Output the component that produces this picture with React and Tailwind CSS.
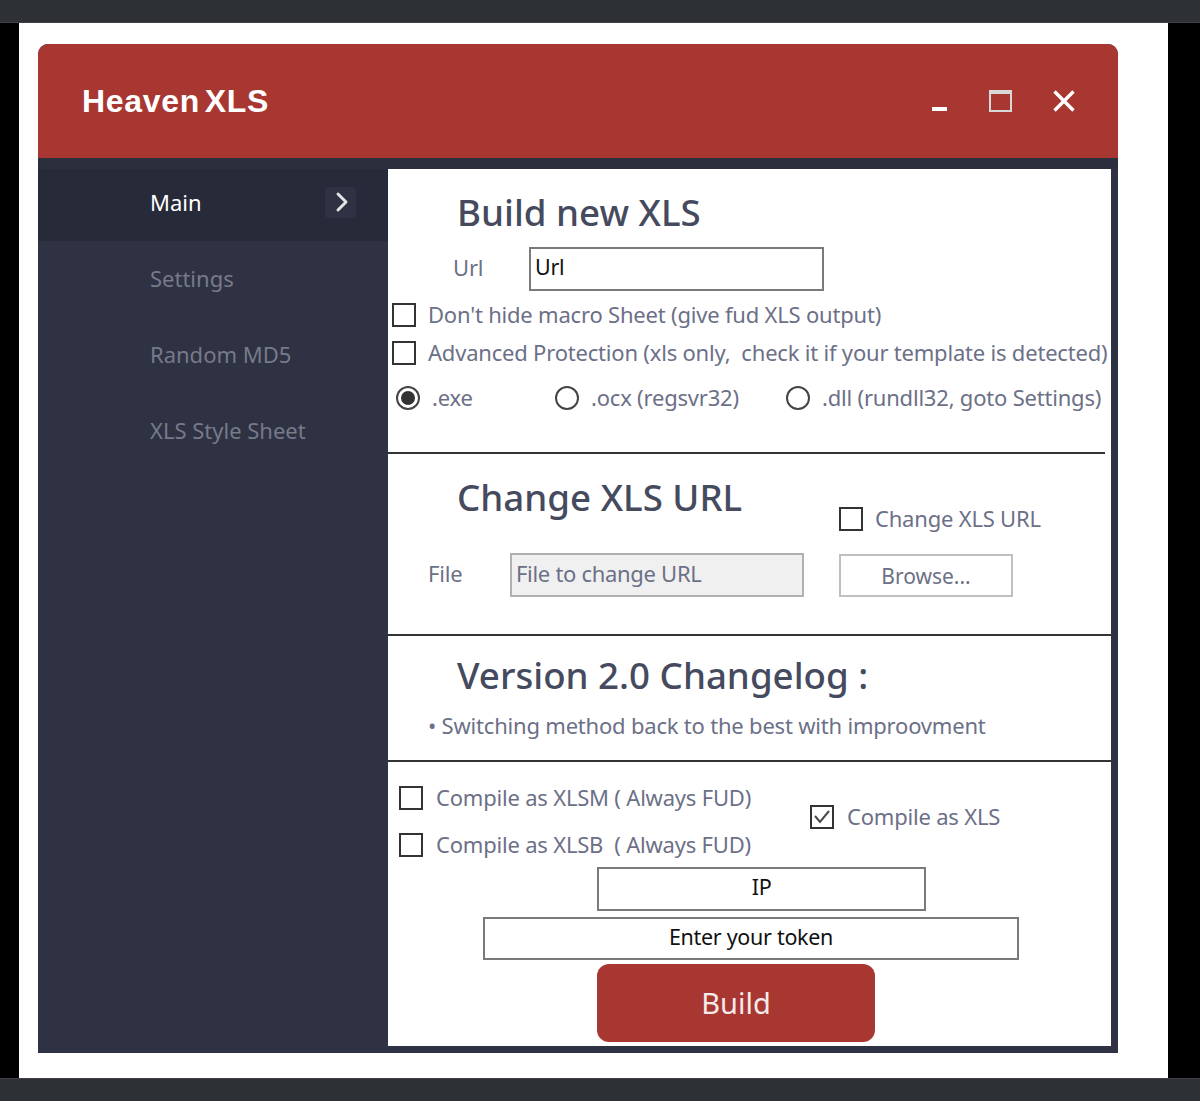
import React from 'react'
import { ChevronRight } from 'lucide-react'

const textFont = "font-['Noto_Sans','Open_Sans',sans-serif]"

function Check({ checked }) {
  return (
    <span className="flex h-[24px] w-[24px] shrink-0 items-center justify-center border-2 border-[#333333] bg-white">
      {checked && (
        <svg viewBox="0 0 20 20" className="h-[20px] w-[20px]" fill="none" stroke="#4a4a4a" strokeWidth="2">
          <path d="M3 9 L8 15 L17 4" />
        </svg>
      )}
    </span>
  )
}

function Radio({ checked }) {
  return (
    <span className="flex h-[24px] w-[24px] shrink-0 items-center justify-center rounded-full border-2 border-[#444444] bg-white">
      {checked && <span className="h-[14px] w-[14px] rounded-full bg-[#333333]" />}
    </span>
  )
}

function Label({ children }) {
  return <span className="inline-block whitespace-pre pb-[2px] text-[22px] leading-[22px] tracking-[-0.2px] text-[#6c7087]">{children}</span>
}

function Heading({ children }) {
  return <h2 className="pb-[2px] text-[36.7px] font-medium leading-[42px] text-[#454a5e]">{children}</h2>
}

function Field({ text, className }) {
  return (
    <div className={`flex items-center justify-center border-2 border-[#7a7a7a] bg-white text-[21.5px] tracking-[-0.3px] text-[#111111] ${className}`}>
      {text}
    </div>
  )
}

function SideItem({ name, active }) {
  if (active) {
    return (
      <div className="flex h-[72px] items-center justify-between bg-[#272a38] pb-[6px] pl-[112px] pr-[32px] text-[22px] text-white">
        <span>{name}</span>
        <span className="flex h-[31px] w-[31px] items-center justify-center rounded bg-[#2e3243] pl-[2px]">
          <ChevronRight className="h-[32px] w-[32px] shrink-0 text-[#e4e4e4]" strokeWidth={2.2} />
        </span>
      </div>
    )
  }
  return <div className="flex h-[76px] items-center pb-[2px] pl-[112px] text-[22px] text-[#777a89]">{name}</div>
}

export default function App() {
  return (
    <div className={`flex h-[1101px] w-[1200px] flex-col overflow-hidden bg-black ${textFont}`}>
      <div className="h-[23px] border-b border-[#3d4045] bg-[#2d3035]" />
      <div className="ml-[19px] h-[1055px] w-[1149px] bg-white pl-[19px] pt-[21px]">
        <div className="flex h-[1009px] w-[1080px] flex-col overflow-hidden rounded-t-[10px] bg-[#2e3243]">
          <div className="flex h-[114px] shrink-0 items-center justify-between bg-[#a83631] pl-[44px] pr-[43px]">
            <span className="font-['Liberation_Sans',sans-serif] text-[32px] font-bold tracking-[0.7px] text-white [word-spacing:-5px]">Heaven XLS</span>
            <div className="flex items-center">
              <span className="mt-[16px] h-[4px] w-[15px] bg-white" />
              <span className="ml-[42px] h-[22px] w-[23px] border-2 border-t-[4px] border-[#d8d8d8]" />
              <svg viewBox="0 0 22 22" className="ml-[41px] h-[22px] w-[22px]" fill="none" stroke="white" strokeWidth="3.4">
                <path d="M1.5 1.5 L20.5 20.5 M20.5 1.5 L1.5 20.5" />
              </svg>
            </div>
          </div>
          <div className="h-[11px] shrink-0 bg-[#2a2e3d]" />
          <div className="flex flex-1">
            <div className="w-[350px] shrink-0">
              <SideItem name="Main" active />
              <SideItem name="Settings" />
              <SideItem name="Random MD5" />
              <SideItem name="XLS Style Sheet" />
            </div>
            <div className="mb-[7px] flex w-[723px] flex-col bg-white">

              <section className="h-[285px] shrink-0">
                <div className="pl-[69px] pt-[22px]"><Heading>Build new XLS</Heading></div>
                <div className="mt-[12px] flex items-center">
                  <span className="ml-[65px] w-[76px]"><Label>Url</Label></span>
                  <div className="flex h-[44px] w-[295px] items-center border-2 border-[#7a7a7a] pb-[3px] pl-[4px] text-[21.5px] tracking-[-0.3px] text-[#111111]">Url</div>
                </div>
                <div className="ml-[4px] mt-[12px] flex items-center gap-[12px]">
                  <Check /><Label>Don't hide macro Sheet (give fud XLS output)</Label>
                </div>
                <div className="ml-[4px] mt-[14px] flex items-center gap-[12px]">
                  <Check /><Label>{"Advanced Protection (xls only,  check it if your template is detected)"}</Label>
                </div>
                <div className="ml-[8px] mt-[21px] flex">
                  <div className="flex w-[159px] items-center gap-[12px]"><Radio checked /><Label>.exe</Label></div>
                  <div className="flex w-[231px] items-center gap-[12px]"><Radio /><Label>.ocx (regsvr32)</Label></div>
                  <div className="flex items-center gap-[12px]"><Radio /><Label>.dll (rundll32, goto Settings)</Label></div>
                </div>
                <div className="mr-[6px] mt-[42px] h-[2px] bg-[#333333]" />
              </section>

              <section className="h-[182px] shrink-0 border-b-2 border-[#333333]">
                <div className="flex">
                  <div className="w-[451px] pl-[69px] pt-[22px]"><Heading>Change XLS URL</Heading></div>
                  <div className="mt-[53px] flex items-center gap-[12px]"><Check /><Label>Change XLS URL</Label></div>
                </div>
                <div className="mt-[22px] flex items-center">
                  <span className="ml-[40px] w-[82px]"><Label>File</Label></span>
                  <div className="flex h-[44px] w-[294px] items-center border-2 border-[#b0b0b0] bg-[#f0f0f0] pb-[3px] pl-[4px] text-[22px] tracking-[-0.3px] text-[#6c7087]">File to change URL</div>
                  <div className="ml-[35px] flex h-[43px] w-[174px] items-center justify-center border-2 border-[#c0c0c0] pt-[4px] text-[21px] text-[#6c7087]">Browse...</div>
                </div>
              </section>

              <section className="h-[126px] shrink-0 border-b-2 border-[#333333]">
                <div className="pl-[69px] pt-[18px]"><Heading>Version 2.0 Changelog :</Heading></div>
                <div className="ml-[40px] mt-[16px]"><Label>• Switching method back to the best with improovment</Label></div>
              </section>

              <section className="flex-1">
                <div className="flex">
                  <div className="ml-[11px] w-[411px] pt-[24px]">
                    <div className="flex items-center gap-[13px]"><Check /><Label>Compile as XLSM ( Always FUD)</Label></div>
                    <div className="mt-[23px] flex items-center gap-[13px]"><Check /><Label>{"Compile as XLSB  ( Always FUD)"}</Label></div>
                  </div>
                  <div className="mt-[43px] flex h-[24px] items-center gap-[13px]"><Check checked /><Label>Compile as XLS</Label></div>
                </div>
                <Field text="IP" className="ml-[209px] mt-[10px] h-[44px] w-[329px] pb-[3px]" />
                <Field text="Enter your token" className="ml-[95px] mt-[6px] h-[43px] w-[536px] pb-[2px]" />
                <div className="ml-[209px] mt-[4px] flex h-[78px] w-[278px] items-center justify-center rounded-[12px] bg-[#a83631] text-[29px] text-[#f4eaea]">Build</div>
              </section>
            </div>
          </div>
        </div>
      </div>
      <div className="h-[23px] border-t border-[#3d4045] bg-[#2d3035]" />
    </div>
  )
}
